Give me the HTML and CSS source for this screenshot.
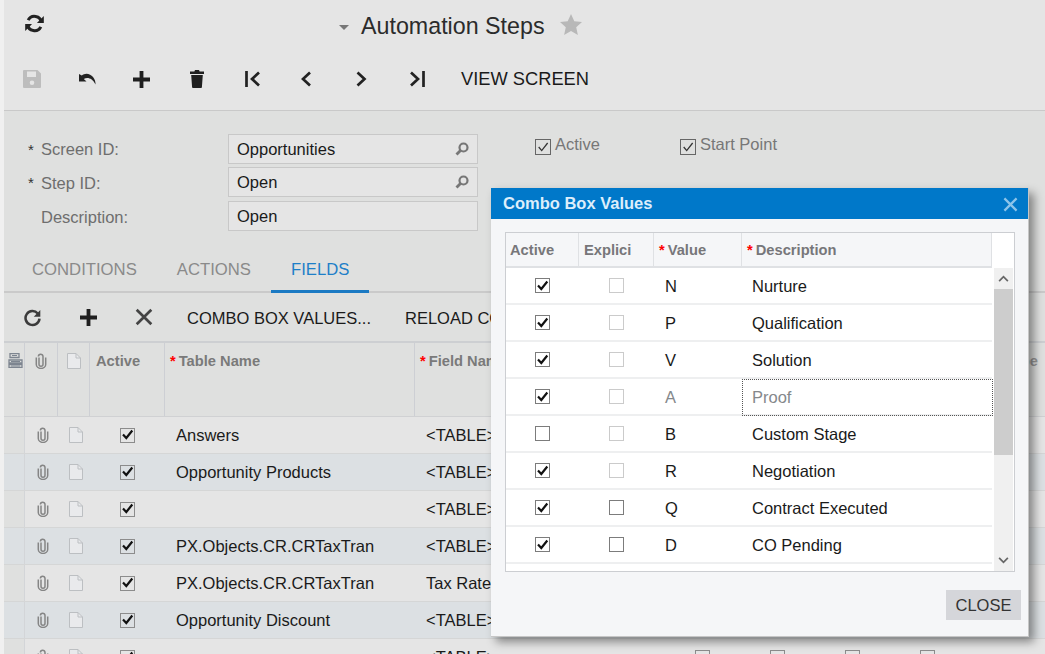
FILE: index.html
```html
<!DOCTYPE html>
<html lang="en">
<head>
<meta charset="utf-8">
<title>Automation Steps</title>
<link rel="stylesheet" href="styles.css">
</head>
<body>
<svg class="defs" aria-hidden="true">
  <symbol id="i-sync" viewBox="0 0 18 18"><path d="M15.600 8A6.700 6.700 0 0 0 3 5.800" fill="none" stroke="currentColor" stroke-width="2.900"/><path d="M17.800 2v6.500h-6.500z"/><path d="M2.400 10A6.700 6.700 0 0 0 15 12.200" fill="none" stroke="currentColor" stroke-width="2.900"/><path d="M.2 16V9.500h6.500z"/></symbol>
  <symbol id="i-refresh" viewBox="0 0 18 18"><path d="M14 5.200A6.600 6.600 0 1 0 15.600 10" fill="none" stroke="currentColor" stroke-width="2.400"/><path d="M16.400 2v6.200h-6.200z"/></symbol>
  <symbol id="i-save" viewBox="0 0 18 18"><path fill-rule="evenodd" d="M1 0h13.500L18 3.500V17a1 1 0 0 1-1 1H1a1 1 0 0 1-1-1V1a1 1 0 0 1 1-1zM4 1.500V7h9V1.500zM9 10.500a2.300 2.300 0 1 0 0 4.600 2.300 2.300 0 0 0 0-4.600z"/></symbol>
  <symbol id="i-undo" viewBox="0 0 20 12"><path d="M1 1v7.500h7.500L5.800 6C9.500 3.800 14.500 5.200 17.500 11.500 18 6 13.500.8 8.500.8 6.700.8 5.200 1.500 3.800 2.500z"/></symbol>
  <symbol id="i-plus" viewBox="0 0 16 16"><path d="M6.200 0h3.600v6.200H16v3.600H9.800V16H6.200V9.800H0V6.200h6.200z"/></symbol>
  <symbol id="i-trash" viewBox="0 0 14 18"><path d="M5 0h4l.6 1.500H14v2.500H0V1.500h4.400zM1.200 5h11.600l-.9 12.200c0 .5-.4.800-.8.800H2.900c-.4 0-.8-.3-.8-.8z"/></symbol>
  <symbol id="i-first" viewBox="0 0 16 16"><path d="M1.500 0v16M14 1.500 7 8l7 6.500" fill="none" stroke="currentColor" stroke-width="2.700"/></symbol>
  <symbol id="i-prev" viewBox="0 0 16 16"><path d="M12 1.500 5 8l7 6.500" fill="none" stroke="currentColor" stroke-width="2.700"/></symbol>
  <symbol id="i-next" viewBox="0 0 16 16"><path d="M4.500 1.500 11.500 8l-7 6.500" fill="none" stroke="currentColor" stroke-width="2.700"/></symbol>
  <symbol id="i-last" viewBox="0 0 16 16"><path d="M14.500 0v16M2 1.500 9 8l-7 6.500" fill="none" stroke="currentColor" stroke-width="2.700"/></symbol>
  <symbol id="i-x" viewBox="0 0 16 16"><path d="M1.500 1.500l13 13M14.500 1.500l-13 13" fill="none" stroke="currentColor" stroke-width="2.400"/></symbol>
  <symbol id="i-search" viewBox="0 0 14 14"><circle cx="8.500" cy="5.500" r="4" fill="none" stroke="currentColor" stroke-width="2.200"/><path d="M5.500 8.500 1.500 12.500" fill="none" stroke="currentColor" stroke-width="2.800"/></symbol>
  <symbol id="i-clip" viewBox="0 0 12 16"><path d="M4 4.500v6.700a2 2 0 0 0 4 0V3.500a2.300 2.300 0 0 0-4.600 0M1.300 4.500v7a4.700 3.900 0 0 0 9.400 0V4.500" fill="none" stroke="currentColor" stroke-width="1.500"/></symbol>
  <symbol id="i-doc" viewBox="0 0 14 16"><path d="M.5.500h8.500l4.500 4.500v10.500H.5z" fill="#e9eaec" stroke="currentColor"/><path d="M9 .5V5h4.500" fill="none" stroke="currentColor"/></symbol>
  <symbol id="i-stack" viewBox="0 0 15 15"><path d="M2 .5h9v4H2zM1 7h13v3H1zM1 11.500h13v3H1z" fill="none" stroke="currentColor" stroke-width="1.300"/><path d="M4 2.500h5M3 8.500h9M3 13h9" stroke="currentColor"/></symbol>
  <symbol id="i-star" viewBox="0 0 22 21"><path d="M11 0l3.300 7.200 7.700.8-5.800 5.200 1.700 7.800L11 17l-6.900 4 1.700-7.800L0 8l7.700-.8z"/></symbol>
  <symbol id="i-check" viewBox="0 0 13 13"><path d="M2 6.500 5.300 10l6-7.500" fill="none" stroke="currentColor" stroke-width="2.200"/></symbol>
  <symbol id="i-check-thin" viewBox="0 0 13 13"><path d="M2.500 6.500 5.300 9.800l5.500-7" fill="none" stroke="currentColor" stroke-width="1.200"/></symbol>
  <symbol id="i-up" viewBox="0 0 12 8"><path d="M1 7l5-5 5 5" fill="none" stroke="currentColor" stroke-width="2"/></symbol>
  <symbol id="i-down" viewBox="0 0 12 8"><path d="M1 1l5 5 5-5" fill="none" stroke="currentColor" stroke-width="2"/></symbol>
</svg>

<div class="page">
  <header class="top">
    <div class="title-row">
      <svg class="ico ico-sync"><use href="#i-sync"/></svg>
      <span class="caret"></span>
      <h1 class="title">Automation Steps</h1>
      <svg class="ico ico-star"><use href="#i-star"/></svg>
    </div>
    <div class="tool-row">
      <span class="tool"><svg class="ico ico-save"><use href="#i-save"/></svg></span>
      <span class="tool"><svg class="ico ico-undo"><use href="#i-undo"/></svg></span>
      <span class="tool"><svg class="ico ico-plus"><use href="#i-plus"/></svg></span>
      <span class="tool"><svg class="ico ico-trash"><use href="#i-trash"/></svg></span>
      <span class="tool"><svg class="ico ico-nav nudge-r"><use href="#i-first"/></svg></span>
      <span class="tool"><svg class="ico ico-nav nudge-l"><use href="#i-prev"/></svg></span>
      <span class="tool"><svg class="ico ico-nav nudge-l"><use href="#i-next"/></svg></span>
      <span class="tool"><svg class="ico ico-nav"><use href="#i-last"/></svg></span>
      <span class="tool-text view">VIEW SCREEN</span>
    </div>
  </header>

  <section class="form">
    <div class="form-fields">
      <div class="field"><span class="star">*</span><label class="label">Screen ID:</label><div class="input">Opportunities<svg class="ico ico-search"><use href="#i-search"/></svg></div></div>
      <div class="field field-tight"><span class="star">*</span><label class="label label-low">Step ID:</label><div class="input">Open<svg class="ico ico-search"><use href="#i-search"/></svg></div></div>
      <div class="field"><span class="star"></span><label class="label label-low">Description:</label><div class="input">Open</div></div>
    </div>
    <div class="form-checks">
      <span class="fcheck"><span class="cb on"><svg><use href="#i-check-thin"/></svg></span>Active</span>
      <span class="fcheck"><span class="cb on"><svg><use href="#i-check-thin"/></svg></span>Start Point</span>
    </div>
  </section>

  <nav class="tabs">
    <span class="tab">CONDITIONS</span>
    <span class="tab">ACTIONS</span>
    <span class="tab active">FIELDS</span>
  </nav>

  <div class="grid-tools">
    <span class="gtool"><svg class="ico ico-refresh"><use href="#i-refresh"/></svg></span>
    <span class="gtool"><svg class="ico ico-plus"><use href="#i-plus"/></svg></span>
    <span class="gtool"><svg class="ico ico-x"><use href="#i-x"/></svg></span>
    <span class="tool-text combo">COMBO BOX VALUES...</span>
    <span class="tool-text reload">RELOAD COLUMNS</span>
  </div>

  <div class="grid">
    <div class="row head">
      <div class="c"><svg class="ico ico-stack"><use href="#i-stack"/></svg></div>
      <div class="c"><svg class="ico ico-clip"><use href="#i-clip"/></svg></div>
      <div class="c"><svg class="ico ico-doc"><use href="#i-doc"/></svg></div>
      <div class="c th">Active</div>
      <div class="c th"><span class="req">*</span>Table Name</div>
      <div class="c th last"><span class="req">*</span>Field Name<span class="th-end">Type</span></div>
    </div>
    <div class="row">
      <div class="c"></div><div class="c"><svg class="ico ico-clip"><use href="#i-clip"/></svg></div><div class="c"><svg class="ico ico-doc"><use href="#i-doc"/></svg></div>
      <div class="c mid"><span class="cb on"><svg><use href="#i-check"/></svg></span></div>
      <div class="c td">Answers</div><div class="c td">&lt;TABLE&gt;</div>
    </div>
    <div class="row alt">
      <div class="c"></div><div class="c"><svg class="ico ico-clip"><use href="#i-clip"/></svg></div><div class="c"><svg class="ico ico-doc"><use href="#i-doc"/></svg></div>
      <div class="c mid"><span class="cb on"><svg><use href="#i-check"/></svg></span></div>
      <div class="c td">Opportunity Products</div><div class="c td">&lt;TABLE&gt;</div>
    </div>
    <div class="row">
      <div class="c"></div><div class="c"><svg class="ico ico-clip"><use href="#i-clip"/></svg></div><div class="c"><svg class="ico ico-doc"><use href="#i-doc"/></svg></div>
      <div class="c mid"><span class="cb on"><svg><use href="#i-check"/></svg></span></div>
      <div class="c td"></div><div class="c td">&lt;TABLE&gt;</div>
    </div>
    <div class="row alt">
      <div class="c"></div><div class="c"><svg class="ico ico-clip"><use href="#i-clip"/></svg></div><div class="c"><svg class="ico ico-doc"><use href="#i-doc"/></svg></div>
      <div class="c mid"><span class="cb on"><svg><use href="#i-check"/></svg></span></div>
      <div class="c td">PX.Objects.CR.CRTaxTran</div><div class="c td">&lt;TABLE&gt;</div>
    </div>
    <div class="row">
      <div class="c"></div><div class="c"><svg class="ico ico-clip"><use href="#i-clip"/></svg></div><div class="c"><svg class="ico ico-doc"><use href="#i-doc"/></svg></div>
      <div class="c mid"><span class="cb on"><svg><use href="#i-check"/></svg></span></div>
      <div class="c td">PX.Objects.CR.CRTaxTran</div><div class="c td">Tax Rate</div>
    </div>
    <div class="row alt">
      <div class="c"></div><div class="c"><svg class="ico ico-clip"><use href="#i-clip"/></svg></div><div class="c"><svg class="ico ico-doc"><use href="#i-doc"/></svg></div>
      <div class="c mid"><span class="cb on"><svg><use href="#i-check"/></svg></span></div>
      <div class="c td">Opportunity Discount</div><div class="c td">&lt;TABLE&gt;</div>
    </div>
    <div class="row">
      <div class="c"></div><div class="c"><svg class="ico ico-clip"><use href="#i-clip"/></svg></div><div class="c"><svg class="ico ico-doc"><use href="#i-doc"/></svg></div>
      <div class="c mid"><span class="cb on"><svg><use href="#i-check"/></svg></span></div>
      <div class="c td"></div>
      <div class="c td trail"><span class="trail-text">&lt;TABLE&gt;</span><span class="cb"></span><span class="cb"></span><span class="cb"></span><span class="cb"></span></div>
    </div>
  </div>
</div>

<div class="dialog" role="dialog">
  <div class="dlg-head"><span>Combo Box Values</span><svg class="ico ico-close"><use href="#i-x"/></svg></div>
  <div class="dlg-body">
    <div class="box">
      <div class="box-head">
        <div class="bh b1">Active</div>
        <div class="bh b2">Explici</div>
        <div class="bh b3"><span class="req">*</span>Value</div>
        <div class="bh b4"><span class="req">*</span>Description</div>
      </div>
      <div class="box-main">
        <div class="box-rows">
          <div class="br"><div class="bc b1"><span class="cb on"><svg><use href="#i-check"/></svg></span></div><div class="bc b2"><span class="cb off"></span></div><div class="bc b3">N</div><div class="bc b4">Nurture</div></div>
          <div class="br"><div class="bc b1"><span class="cb on"><svg><use href="#i-check"/></svg></span></div><div class="bc b2"><span class="cb off"></span></div><div class="bc b3">P</div><div class="bc b4">Qualification</div></div>
          <div class="br"><div class="bc b1"><span class="cb on"><svg><use href="#i-check"/></svg></span></div><div class="bc b2"><span class="cb off"></span></div><div class="bc b3">V</div><div class="bc b4">Solution</div></div>
          <div class="br dim"><div class="bc b1"><span class="cb on"><svg><use href="#i-check"/></svg></span></div><div class="bc b2"><span class="cb off"></span></div><div class="bc b3">A</div><div class="bc b4 focus">Proof</div></div>
          <div class="br"><div class="bc b1"><span class="cb"></span></div><div class="bc b2"><span class="cb off"></span></div><div class="bc b3">B</div><div class="bc b4">Custom Stage</div></div>
          <div class="br"><div class="bc b1"><span class="cb on"><svg><use href="#i-check"/></svg></span></div><div class="bc b2"><span class="cb off"></span></div><div class="bc b3">R</div><div class="bc b4">Negotiation</div></div>
          <div class="br"><div class="bc b1"><span class="cb on"><svg><use href="#i-check"/></svg></span></div><div class="bc b2"><span class="cb"></span></div><div class="bc b3">Q</div><div class="bc b4">Contract Executed</div></div>
          <div class="br"><div class="bc b1"><span class="cb on"><svg><use href="#i-check"/></svg></span></div><div class="bc b2"><span class="cb"></span></div><div class="bc b3">D</div><div class="bc b4">CO Pending</div></div>
        </div>
        <div class="scroll">
          <span class="sb-btn"><svg class="ico ico-arrow"><use href="#i-up"/></svg></span>
          <span class="sb-thumb"></span>
          <span class="sb-rest"></span>
          <span class="sb-btn"><svg class="ico ico-arrow"><use href="#i-down"/></svg></span>
        </div>
      </div>
    </div>
    <div class="dlg-foot"><span class="btn">CLOSE</span></div>
  </div>
</div>
</body>
</html>
```
FILE: styles.css
```css
* { box-sizing: border-box; }
html, body { margin: 0; height: 100%; }
body {
  width: 1045px; height: 654px; overflow: hidden; position: relative;
  background: #f0f0f0;
  font: 16.500px "Liberation Sans", Arial, sans-serif;
  color: #1a1a1a;
}
.defs { width: 0; height: 0; position: absolute; }
.ico { display: block; fill: currentColor; flex: none; }
.page { margin-left: 4px; height: 654px; overflow: hidden; background: #dfe0df; }

/* top */
.top { height: 111px; background: #e5e5e5; border-bottom: 1px solid #c9c9c9; }
.title-row { height: 51px; display: flex; align-items: center; }
.ico-sync { width: 19px; height: 19px; margin: -5px 0 0 21px; color: #222; }
.caret { width: 0; height: 0; margin: 3px 0 0 295px; border: 5px solid transparent; border-top: 5px solid #777; border-bottom: 0; }
.title { margin: 1px 0 0 12px; font-size: 23.250px; font-weight: 400; color: #2b2b2b; }
.ico-star { width: 22px; height: 21px; margin: -3px 0 0 15px; color: #b8b8b8; }
.tool-row { height: 56px; display: flex; align-items: center; }
.tool { width: 55px; display: flex; justify-content: center; }
.tool-text { font-size: 16.500px; color: #1a1a1a; white-space: nowrap; }
.tool-text.view { margin-left: 17px; font-size: 18.300px; }
.ico-save { width: 18px; height: 18px; color: #bdbdbd; }
.ico-undo { width: 20px; height: 12px; color: #222; margin-left: 2px; }
.ico-plus { width: 17px; height: 17px; color: #1f1f1f; }
.ico-trash { width: 14px; height: 18px; color: #1f1f1f; }
.ico-nav { width: 16px; height: 16px; color: #222; }
.nudge-r { margin-left: 2px; }
.nudge-l { margin-left: -2px; }

/* form */
.form { height: 139px; padding: 23px 0 0 24px; display: flex; }
.form-fields { width: 450px; display: flex; flex-direction: column; gap: 4px; }
.field { display: flex; align-items: center; height: 30px; }
.field-tight { margin-top: -1px; }
.star { width: 13px; font-size: 15px; color: #333; margin-top: 1px; }
.label { width: 187px; color: #6e6e6e; }
.label-low { padding-top: 2px; }
.input { width: 250px; height: 30px; padding: 0 8px; display: flex; align-items: center; justify-content: space-between;
  background: #e5e5e5; border: 1px solid #c8c8c8; color: #1a1a1a; }
.ico-search { width: 14px; height: 14px; color: #777; }
.form-checks { display: flex; gap: 80px; padding: 0 0 0 57px; align-items: flex-start; }
.fcheck { display: flex; align-items: flex-start; gap: 4px; color: #777; line-height: 20px; height: 22px; }
.cb { width: 15px; height: 15px; flex: none; display: block; background: transparent; border: 1.500px solid #8c8c8c; color: #111; }
.cb svg { display: block; width: 13px; height: 13px; margin: -.5px; }
.fcheck .cb { width: 16px; height: 16px; margin-top: 5px; border: 1px solid #666; color: #333; }
.fcheck .cb svg { margin: 0; width: 14px; height: 14px; }

/* tabs */
.tabs { height: 43px; display: flex; padding-left: 8px; border-bottom: 2px solid #cacaca; }
.tab { padding: 10px 20px 0; height: 43px; color: #8a8a8a; font-size: 16.700px; }
.tab.active { color: #1e7fc8; border-bottom: 3px solid #1b7ac3; }

/* grid */
.grid-tools { height: 50px; display: flex; align-items: center; border-bottom: 2px solid #cdcfd2; }
.gtool { width: 56px; display: flex; justify-content: center; }
.ico-refresh { width: 19px; height: 19px; color: #3b3b3b; }
.ico-x { width: 18px; height: 18px; color: #444; }
.combo { margin: 2px 0 0 15px; }
.reload { margin: 2px 0 0 34px; }

.grid { display: flex; flex-direction: column; }
.row { height: 37px; display: grid; grid-template-columns: 21px 33px 32px 75px 250px 1fr; background: #e5e5e5; border-bottom: 1px solid #d5d6d6; }
.row.alt { background: #dce0e3; }
.row.head { height: 74px; background: #dfe0df; border-bottom: 1px solid #d0d1d3; }
.c { display: flex; align-items: center; justify-content: center; min-width: 0; }
.row .c:first-child { background: #dfe0df; border-right: 1px solid #d3d5d8; }
.row.alt .c:first-child { background: #dce0e3; }
.row.head .c { align-items: flex-start; padding-top: 10px; border-right: 1px solid #cdcfd4; justify-content: center; }
.row.head .th { justify-content: flex-start; padding-left: 6px; font-size: 14.700px; font-weight: 700; color: #7a7a7a; padding-top: 10px; }
.row.head .c:nth-child(5) { padding-left: 5px; }
.row.head .last { border-right: 0; padding-left: 5px; }
.th-end { margin-left: auto; margin-right: 7px; color: #989898; }
.req { color: #f00; margin-right: 3px; font-weight: 700; }
.ico-stack { width: 15px; height: 15px; color: #7d8590; margin-left: 2px; }
.ico-clip { width: 12px; height: 16px; color: #858585; }
.ico-doc { width: 14px; height: 16px; color: #bcbfc2; }
.row .c:nth-child(2) .ico-clip { margin-left: 2px; }
.row .c:nth-child(3) .ico-doc { margin-left: 3px; }
.row.head .c:nth-child(2) .ico-clip { margin-left: 0; }
.row.head .c:nth-child(3) .ico-doc { margin-left: 0; }
.td { justify-content: flex-start; padding: 0 0 0 11px; white-space: nowrap; overflow: hidden; }
.trail { gap: 60px; }
.trail-text { width: 209px; }

/* dialog */
.dialog { position: absolute; left: 491px; top: 188px; width: 538px; height: 449px; background: #f5f6f8;
  box-shadow: 5px 5px 9px rgba(0,0,0,.42); border-right: 1px solid #c6c6c6; border-bottom: 1px solid #c6c6c6; }
.dlg-head { height: 31px; background: #0078c9; color: #dceefb; font-weight: 700; font-size: 16.500px; padding: 0 10px 0 12px; display: flex; align-items: center; justify-content: space-between; }
.ico-close { width: 15px; height: 15px; color: #8cc4ea; margin-top: 2px; }
.dlg-body { padding: 13px 14px 0 14px; }
.box { width: 510px; height: 340px; border: 1px solid #ccced2; background: #fff; overflow: hidden; }
.box-head { height: 35px; display: flex; }
.bh { height: 35px; font-size: 14.700px; font-weight: 700; color: #77767a; background: #f5f6f8; border-right: 1px solid #dfe1e4; border-bottom: 2px solid #dfe1e4; display: flex; align-items: center; padding-left: 4px; white-space: nowrap; overflow: hidden; }
.b1 { width: 73px; }
.b2 { width: 75px; }
.b3 { width: 88px; }
.b4 { width: 250px; }
.bh.b2 { padding-left: 5px; }
.bh.b3, .bh.b4 { padding-left: 5px; }
.box-main { display: flex; height: 303px; }
.box-rows { width: 488px; flex: none; }
.br { width: 486px; height: 37px; display: flex; border-bottom: 2px solid #eeeff0; }
.bc { display: flex; flex: none; align-items: center; height: 35px; }
.bc.b1, .bc.b2 { justify-content: center; }
.bc.b2 { padding-right: 1px; }
.bc.b3 { padding: 2px 0 0 11px; }
.bc.b4 { padding: 2px 0 0 10px; }
.br .cb { border-color: #7c7c7c; background: #fff; }
.br .cb.off { border-color: #cbcbcb; }
.dim .b3, .dim .b4 { color: #85888b; }
.bc.b4.focus { height: 37px; width: 251px; padding: 0 0 0 9px; border: 1px dotted #555; }
.scroll { width: 19px; flex: none; display: flex; flex-direction: column; background: #f0f0f0; }
.sb-btn { height: 21px; flex: none; display: flex; align-items: center; justify-content: center; color: #666; }
.sb-thumb { height: 166px; background: #cdcdcd; }
.sb-rest { flex: 1; }
.ico-arrow { width: 11px; height: 7px; }
.dlg-foot { display: flex; justify-content: flex-end; margin: 18px -7px 0 0; }
.btn { width: 75px; height: 30px; background: #d5d6da; color: #333; display: flex; align-items: center; justify-content: center; font-size: 16.500px; }
```
